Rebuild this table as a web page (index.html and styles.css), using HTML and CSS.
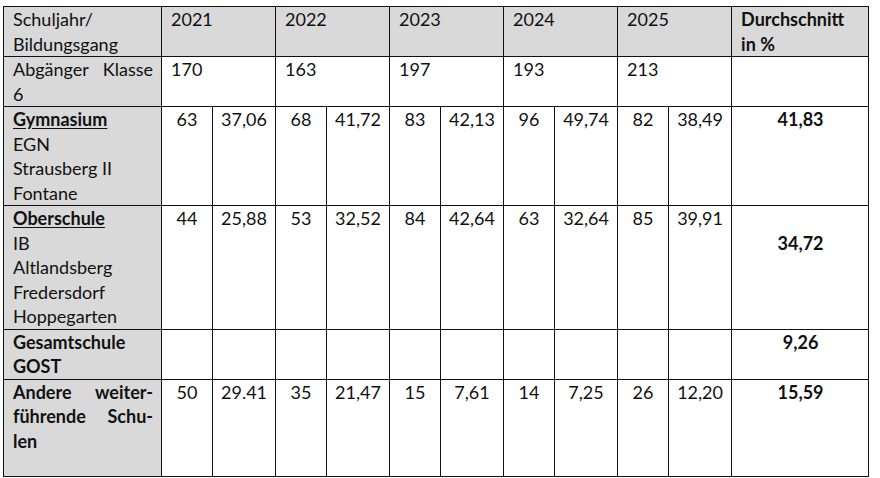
FILE: index.html
```html
<!DOCTYPE html>
<html lang="de">
<head>
    <meta charset="UTF-8">
    <meta name="viewport" content="width=device-width,initial-scale=1.0">
    <title>Abgänger Klasse 6</title>
    <link rel="stylesheet" href="styles.css">
</head>
<body>
    <table class="stats">
        <colgroup>
            <col class="c-label">
            <col class="c-num"><col class="c-pct">
            <col class="c-num"><col class="c-pct">
            <col class="c-num"><col class="c-pct">
            <col class="c-num"><col class="c-pct">
            <col class="c-num"><col class="c-pct">
            <col class="c-avg">
        </colgroup>
        <tr class="row-head">
            <th class="label">Schuljahr/<br>Bildungsgang</th>
            <th colspan="2">2021</th>
            <th colspan="2">2022</th>
            <th colspan="2">2023</th>
            <th colspan="2">2024</th>
            <th colspan="2">2025</th>
            <th class="bold">Durchschnitt<br>in %</th>
        </tr>
        <tr class="row-total">
            <td class="label"><span class="just">Abgänger Klasse</span>6</td>
            <td colspan="2">170</td>
            <td colspan="2">163</td>
            <td colspan="2">197</td>
            <td colspan="2">193</td>
            <td colspan="2">213</td>
            <td></td>
        </tr>
        <tr class="row-gym">
            <td class="label"><b class="under">Gymnasium</b><br>EGN<br>Strausberg II<br>Fontane</td>
            <td class="num">63</td><td class="num">37,06</td>
            <td class="num">68</td><td class="num">41,72</td>
            <td class="num">83</td><td class="num">42,13</td>
            <td class="num">96</td><td class="num">49,74</td>
            <td class="num">82</td><td class="num">38,49</td>
            <td class="avg">41,83</td>
        </tr>
        <tr class="row-ober">
            <td class="label"><b class="under">Oberschule</b><br>IB<br>Altlandsberg<br>Fredersdorf<br>Hoppegarten</td>
            <td class="num">44</td><td class="num">25,88</td>
            <td class="num">53</td><td class="num">32,52</td>
            <td class="num">84</td><td class="num">42,64</td>
            <td class="num">63</td><td class="num">32,64</td>
            <td class="num">85</td><td class="num">39,91</td>
            <td class="avg"><br>34,72</td>
        </tr>
        <tr class="row-ges">
            <td class="label bold">Gesamtschule<br>GOST</td>
            <td></td><td></td>
            <td></td><td></td>
            <td></td><td></td>
            <td></td><td></td>
            <td></td><td></td>
            <td class="avg">9,26</td>
        </tr>
        <tr class="row-other">
            <td class="label bold"><span class="just">Andere weiter-</span><span class="just">führende Schu-</span>len</td>
            <td class="num">50</td><td class="num">29.41</td>
            <td class="num">35</td><td class="num">21,47</td>
            <td class="num">15</td><td class="num">7,61</td>
            <td class="num">14</td><td class="num">7,25</td>
            <td class="num">26</td><td class="num">12,20</td>
            <td class="avg">15,59</td>
        </tr>
    </table>
</body>
</html>
```

FILE: styles.css
```css
body,html{
    margin:0;
    padding:0;
    background-color:#fff;
    color:#111;
    font-family:Lato,"Open Sans",sans-serif;
    font-size:18px;
    line-height:24.5px;
}
.stats{
    border-collapse:collapse;
    table-layout:fixed;
    width:864px;
    margin:6px 0 0 3px;
}
.c-label{width:158px;}
.c-num{width:51px;}
.c-pct{width:63px;}
.c-avg{width:137px;}
.stats th,.stats td{
    border:1.5px solid #111;
    padding:0 8px 0 9px;
    vertical-align:top;
    text-align:left;
    font-weight:normal;
    overflow:hidden;
}
.row-head th{
    background-color:#d9d9d9;
}
.stats .label{
    background-color:#d9d9d9;
}
.row-head{height:50px;}
.row-total{height:50px;}
.row-gym{height:98px;}
.row-ober{height:123px;}
.row-ges{height:50px;}
.row-other{height:97px;}
.stats .num{
    padding:0;
    text-align:center;
}
.stats .avg{
    text-align:center;
    font-weight:bold;
}
.stats .bold{
    font-weight:bold;
}
.under{
    text-decoration:underline;
    text-underline-offset:2px;
}
.just{
    display:block;
    text-align:justify;
    text-align-last:justify;
}
```
